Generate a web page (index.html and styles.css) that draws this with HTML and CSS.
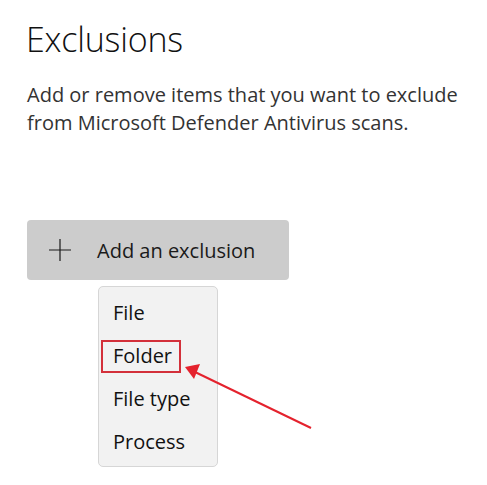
FILE: index.html
```html
<!DOCTYPE html>
<html>
<head>
<meta charset="utf-8">
<link rel="stylesheet" href="styles.css">
</head>
<body>
<div class="page">
  <h1 class="title">Exclusions</h1>
  <p class="desc">Add or remove items that you want to exclude from Microsoft Defender Antivirus scans.</p>
  <div class="button">
    <svg class="plus" width="22" height="22" viewBox="0 0 22 22"><path d="M11 0V22M0 11H22" stroke="#1a1a1a" stroke-width="1.2" fill="none"/></svg>
    <span class="btn-label">Add an exclusion</span>
  </div>
  <ul class="menu">
    <li class="item">File</li>
    <li class="item">Folder<span class="highlight"></span></li>
    <li class="item">File type</li>
    <li class="item">Process</li>
  </ul>
</div>
<svg class="arrow" width="487" height="485" viewBox="0 0 487 485">
  <line x1="311" y1="428" x2="195" y2="372" stroke="#e4222d" stroke-width="2"/>
  <polygon points="185,367 200,364 194,379" fill="#e4222d"/>
</svg>
</body>
</html>
```
FILE: styles.css
```css
html, body {
  margin: 0;
  padding: 0;
  background: #ffffff;
}
.page {
  padding: 16px 0 0 26px;
  font-family: "Open Sans", "Noto Sans", sans-serif;
  color: #1a1a1a;
}
.title {
  margin: 0;
  font-weight: 300;
  font-size: 34px;
  line-height: 46px;
  color: #111;
  letter-spacing: -0.2px;
}
.desc {
  margin: 19px 0 0 1px;
  width: 460px;
  font-size: 20px;
  line-height: 28px;
  color: #333;
}
.button {
  margin: 83px 0 0 1px;
  width: 262px;
  height: 60px;
  background: #cccccc;
  border-radius: 4px;
  display: flex;
  align-items: center;
  box-sizing: border-box;
  padding-left: 22px;
}
.plus {
  display: block;
  flex: none;
}
.btn-label {
  margin-left: 26px;
  font-size: 20px;
  color: #1a1a1a;
}
.menu {
  list-style: none;
  margin: 6px 0 0 72px;
  padding: 4px 0;
  width: 120px;
  height: 181px;
  box-sizing: border-box;
  background: #f2f2f2;
  border: 1px solid #d6d6d6;
  border-radius: 5px;
}
.item {
  position: relative;
  height: 43px;
  line-height: 43px;
  padding-left: 14px;
  font-size: 20px;
  color: #111;
}
.highlight {
  position: absolute;
  left: 2px;
  top: 6px;
  width: 80px;
  height: 33px;
  box-sizing: border-box;
  border: 2px solid #d3303a;
}
.arrow {
  position: absolute;
  left: 0;
  top: 0;
  pointer-events: none;
}
```
